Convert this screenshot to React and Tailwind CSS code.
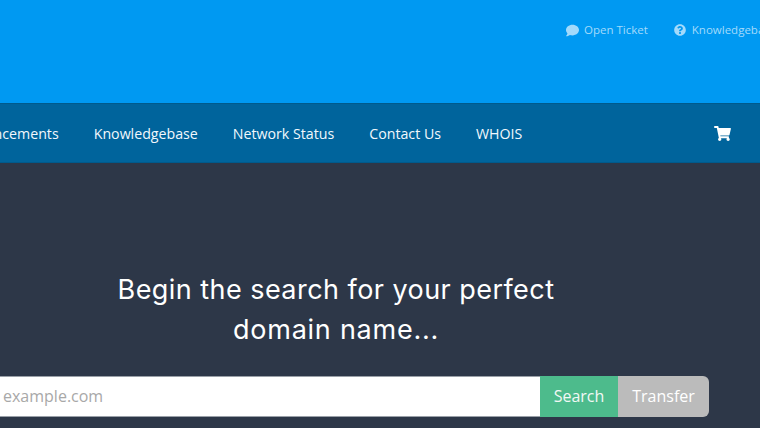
import { FaComment, FaQuestionCircle, FaShoppingCart } from "react-icons/fa";

export default function App() {
  return (
    <div className="w-[760px] h-[428px] overflow-hidden bg-[#2d3748] font-['Open_Sans',sans-serif]">
      <header className="h-[103px] bg-[#0099f2] flex justify-start pt-[22px] pl-[566px] whitespace-nowrap text-[11.5px] leading-[16px] text-[#a3dafb]">
        <a className="flex items-center h-[16px]">
          <FaComment className="w-[13px] h-[13px] mr-[5px]" />
          <span>Open Ticket</span>
        </a>
        <a className="flex items-center h-[16px] ml-[26px]">
          <FaQuestionCircle className="w-[12px] h-[12px] mr-[6px]" />
          <span>Knowledgebase</span>
        </a>
      </header>
      <nav className="h-[60px] bg-[#00649c] border-t border-b border-[#005a8c] flex items-center whitespace-nowrap text-[14.2px] text-[#f2f8fc]">
        <div className="flex flex-1 items-center gap-[35px] -ml-[50px] pt-[1px]">
          <span>Announcements</span>
          <span>Knowledgebase</span>
          <span>Network Status</span>
          <span>Contact Us</span>
          <span>WHOIS</span>
        </div>
        <FaShoppingCart className="w-[17px] h-[15px] text-white mr-[29px]" />
      </nav>
      <section className="flex flex-col items-center pt-[107px]">
        <h1 className="w-[560px] -ml-[88px] text-center text-[27px] leading-[40px] text-white font-['Inter',sans-serif] tracking-[0.45px]">
          Begin the search for your perfect
          <br />
          <span className="tracking-[0.75px]">domain name...</span>
        </h1>
        <div className="self-start mt-[26px] w-[709px] h-[41px] flex text-[16px]">
          <div className="flex-1 bg-white flex items-center pl-[3px] pb-[2px] text-[#a8a8a8] border-y border-[#9aa0a8]">example.com</div>
          <button className="w-[78px] bg-[#4dbb8c] text-[#f2f8f5] pb-[2px]">Search</button>
          <button className="w-[91px] bg-[#bbbbbb] text-white rounded-r-[6px] pb-[2px]">Transfer</button>
        </div>
      </section>
    </div>
  );
}
